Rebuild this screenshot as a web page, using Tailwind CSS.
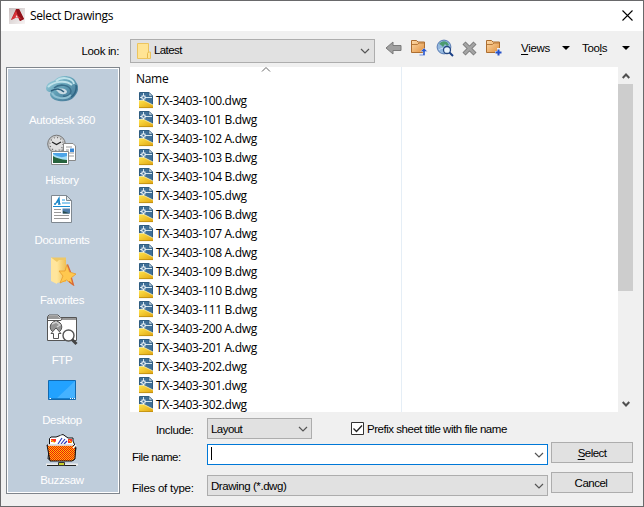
<!DOCTYPE html>
<html lang="en">
<head>
<meta charset="utf-8">
<title>Select Drawings</title>
<script src="https://cdn.jsdelivr.net/npm/@tailwindcss/browser@4"></script>
</head>
<body class="overflow-hidden">
<svg class="absolute h-0 w-0" aria-hidden="true">
  <defs>
    <linearGradient id="fold" x1="0" y1="0" x2="1" y2="1"><stop offset="0" stop-color="#ffdcaa"/><stop offset="1" stop-color="#e0903f"/></linearGradient>
    <linearGradient id="swirl" x1="0" y1="0" x2="1" y2="1"><stop offset="0" stop-color="#a9dbe6"/><stop offset=".5" stop-color="#5f9db4"/><stop offset="1" stop-color="#3f6f90"/></linearGradient>
    <linearGradient id="yel" x1="0" y1="0" x2="1" y2="0"><stop offset="0" stop-color="#ffe69a"/><stop offset="1" stop-color="#f0bf55"/></linearGradient>
    <linearGradient id="gold" x1="0" y1="0" x2="1" y2="1"><stop offset="0" stop-color="#ffe24a"/><stop offset="1" stop-color="#e0a410"/></linearGradient>
    <linearGradient id="logo" x1="0" y1="0" x2="1" y2="1"><stop offset="0" stop-color="#c9c0c0"/><stop offset="1" stop-color="#f8f4f4"/></linearGradient>
    <pattern id="chk" width="2" height="2" patternUnits="userSpaceOnUse"><rect width="2" height="2" fill="#ffc400"/><rect width="1" height="1" fill="#f01010"/><rect x="1" y="1" width="1" height="1" fill="#f01010"/></pattern>
    <symbol id="dwg" viewBox="0 0 15 17">
      <path d="M.5 .5H10L13.500 4V15.500H.5Z" fill="#3f6f98" stroke="#2f5c80"/>
      <path d="M10 .5V4H13.500Z" fill="#dfeaf0" stroke="#2f5c80" stroke-width=".6"/>
      <path d="M4.500 1V9M1 5.500H13" stroke="#d3e5ef"/><rect x="3" y="4" width="3" height="3" fill="#3f6f98" stroke="#fff" stroke-width=".9"/>
      <path d="M0 8.500H5L14 13V16H0Z" fill="url(#gold)"/><path d="M0 8.500H5L14 13" stroke="#fff3b0" stroke-width=".8" fill="none"/><path d="M0 15.600H14" stroke="#b98a10" stroke-width=".8"/>
    </symbol>
    <symbol id="chev" viewBox="0 0 10 6"><path d="M1 1L5 5L9 1" fill="none" stroke="#555" stroke-width="1.200"/></symbol>
  </defs>
</svg>
<main class="flex h-[507px] w-[644px] flex-col border border-[#69696b] bg-[#f0f0f0] font-['Liberation_Sans',Arial,sans-serif] text-[11.5px] text-black">
  <header class="flex h-[30px] shrink-0 items-center bg-white pl-2">
    <svg class="h-4 w-4" viewBox="0 0 16 16"><rect width="16" height="16" fill="url(#logo)"/><path d="M2 12L7 1H10L15 11L11 13L9 9L6 10Z" fill="#b51f27"/><path d="M7 1H10L15 11L11 13L8 6Z" fill="#8f1119"/><path d="M2 12L7 3L9 8L13 11L9 10L6 10Z" fill="#d9343a"/><path d="M7.500 7L6.500 9.500H9Z" fill="#f5e4e4"/></svg>
    <h1 class="ml-[5px] font-['Open_Sans','Noto_Sans',sans-serif] text-[12px] leading-4 tracking-[-0.36px]">Select Drawings</h1>
    <svg class="mr-[10px] mb-[2px] ml-auto h-[11px] w-[11px]" viewBox="0 0 11 11"><path d="M.5 .5L10.500 10.500M10.500 .5L.5 10.500" stroke="#000" stroke-width="1.100"/></svg>
  </header>

  <section class="flex h-9 shrink-0 items-start pt-[8px]">
    <div class="w-[118px] pt-[5px] text-right leading-[14px] tracking-[-0.35px]">Look in:</div>
    <div class="ml-[11px] flex h-[24px] w-[245px] items-center border border-[#adadad] bg-[#e1e1e1] pr-[4px] pl-[6px]">
      <svg class="h-4 w-[14px]" viewBox="0 0 14 16"><path d="M.5 .5H11.500V9H13.500V15.500H.5Z" fill="#ffe494" stroke="#ecc45e"/><path d="M10.500 15V10.500L11.500 9" fill="none" stroke="#e5b94c"/></svg>
      <span class="mb-[2px] ml-[3px] leading-[14px] tracking-[-0.6px]">Latest</span>
      <svg class="ml-auto h-[6px] w-[10px]"><use href="#chev"/></svg>
    </div>
    <div class="flex h-[18px] items-center pl-[10px]">
      <svg class="h-[18px] w-[17px]" viewBox="0 0 17 18"><path d="M1 9L8 3V6.500H16V11.500H8V15Z" fill="#a0a0a0" stroke="#7b7b7b" stroke-linejoin="round"/></svg>
      <svg class="ml-[8px] h-[18px] w-[18px]" viewBox="0 0 18 18"><path d="M1.500 1.500H6.500L8 3H14.500V13.500H1.500Z" fill="url(#fold)" stroke="#ad6e30"/><path d="M2 5.500H7.500L9 4H14" stroke="#b87938" fill="none"/><path d="M9.500 15.500H13V12.500H10.500L14 9L17.500 12.500H15V16.500H9.500Z" fill="#2858d0" stroke="#f0f0f0" stroke-width=".4"/></svg>
      <svg class="ml-[8px] h-[18px] w-[18px]" viewBox="0 0 18 18"><circle cx="8" cy="8" r="6.900" fill="#94b8df" stroke="#5c7eb5"/><path d="M3 5Q6 1 11 3L13 6L11 7L9 5L7 8L5 6Z" fill="#4c9b70"/><path d="M3 11Q7 7 12 12" stroke="#c7dff4" fill="none"/><circle cx="11" cy="11" r="3.500" fill="#e8f4fc" stroke="#244882" stroke-width="1.300"/><path d="M13.500 13.500L17 17" stroke="#183e86" stroke-width="2"/></svg>
      <svg class="ml-[7px] h-[18px] w-[17px]" viewBox="0 0 17 18"><path d="M3 4L14 15M14 4L3 15" stroke="#777" stroke-width="4.300"/><path d="M3.500 4.500L13.500 14.500M13.500 4.500L3.500 14.500" stroke="#a4a4a4" stroke-width="2.600"/></svg>
      <svg class="ml-[7px] h-[18px] w-[18px]" viewBox="0 0 18 18"><path d="M1.500 1.500H6.500L8 3H14.500V13.500H1.500Z" fill="url(#fold)" stroke="#ad6e30"/><path d="M2 5.500H7.500L9 4H14" stroke="#b87938" fill="none"/><path d="M13.500 9V17M10 13.500H17" stroke="#f0f0f0" stroke-width="3"/><path d="M13.500 10.500V16.500M10.500 13.500H16.500" stroke="#2450c8" stroke-width="2"/></svg>
    </div>
    <div class="ml-[18px] flex pt-[2px] leading-[14px]">
      <span class="w-[41px] tracking-[-0.3px]"><u class="underline-offset-2">V</u>iews</span>
      <svg class="mt-[5px] h-1 w-[8px]" viewBox="0 0 8 4"><path d="M0 0H8L4 4Z"/></svg>
      <span class="ml-[12px] w-[40px] tracking-[-0.35px]">Too<u class="underline-offset-2">l</u>s</span>
      <svg class="mt-[5px] h-1 w-[8px]" viewBox="0 0 8 4"><path d="M0 0H8L4 4Z"/></svg>
    </div>
  </section>

  <div class="flex min-h-0 flex-1">
    <nav class="ml-[5px] h-[427px] w-[114px] shrink-0 border border-[#7f858c] bg-white p-px">
      <div class="flex h-full flex-col bg-[#bfcddb] pr-[2px] text-center text-white [&>div]:flex [&>div]:h-[60px] [&>div]:shrink-0 [&>div]:flex-col [&>div]:items-center [&_span]:mt-[7px] [&_span]:leading-[14px] [&_span]:tracking-[-0.35px] [&_svg]:mt-[5px] [&_svg]:h-8 [&_svg]:w-8 [&_svg]:shrink-0">
        <div><svg viewBox="0 0 32 32"><path d="M0 14C1 8 6 8 9 6C14 0 27 1 30 8C34 13 32 19 28 23C24 28 15 28 9 26C4 24 3 20 5 18C1 18 0 16 0 14Z" fill="url(#swirl)"/><path d="M10 7C16 2 27 4 28 10M2 13C8 7 20 6 26 11" fill="none" stroke="#bfe2ea" stroke-width="2"/><path d="M8 14C14 9 24 11 25 17C25 21 21 23 17 22" fill="none" stroke="#3a6f8b" stroke-width="1.500"/><path d="M10 16C15 13 21 15 21 18C20 21 14 21 12 18Z" fill="#c9dbe4"/><path d="M6 19C9 25 20 26 25 21" fill="none" stroke="#8fc0d2" stroke-width="2"/><path d="M5 17C10 14 15 15 18 18" fill="none" stroke="#2f607d" stroke-width="1.500"/><path d="M30 11C31 17 28 21 25 23" fill="none" stroke="#2f6482" stroke-width="1.500"/></svg><span>Autodesk 360</span></div>
        <div><svg viewBox="0 0 32 32"><circle cx="10.500" cy="10" r="8.800" fill="#c8c8c8" stroke="#777"/><circle cx="10.500" cy="10" r="6.800" fill="#e0e0e0"/><circle cx="10.500" cy="10" r="6.500" fill="none" stroke="#555" stroke-dasharray=".8 2.600" stroke-width="1.200"/><path d="M6 8L10.500 10.500L15 8" fill="none" stroke="#222" stroke-width="1.200"/><path d="M17.500 9.500H27L29.500 12V26.500H17.500Z" fill="#fff" stroke="#888"/><path d="M20 13H26M20 16H23M20 19H28M20 22H28" stroke="#999"/><path d="M24 14.500H28V18H24Z" fill="#3787d5"/><path d="M5.500 17.500H22.500V30.500H5.500Z" fill="#fff" stroke="#888"/><path d="M7 19H21V29H7Z" fill="#4da4e7"/><path d="M7 20Q14 25 21 22V26H7Z" fill="#a7def5"/><path d="M7 22Q12 25 21 26V29H7Z" fill="#27633d"/></svg><span>History</span></div>
        <div><svg viewBox="0 0 32 32"><path d="M5.500 1.500H20.500L25.500 6.500V28.500H5.500Z" fill="#fff" stroke="#7f8890"/><path d="M20.500 1.500V6.500H25.500Z" fill="#dce5e9" stroke="#7f8890"/><path d="M8 10H10M12 10H14.500M9.500 10L13 4L13.500 10M11 8H14" fill="none" stroke="#1785c8" stroke-width="1.300"/><path d="M16 6H19M16 9H24" stroke="#269ae0"/><path d="M7 12.500H24" stroke="#168bd1"/><path d="M8 15.500H15M8 18.500H15M8 21.500H23M8 24.500H23" stroke="#999"/><path d="M16.500 14.500H24V19.500H16.500Z" fill="#507eab"/><path d="M17 17L24 19.500H17Z" fill="#284d4c"/></svg><span>Documents</span></div>
        <div><svg viewBox="0 0 32 32"><path d="M5 3.500H20V28H10L5 26Z" fill="#efc866"/><path d="M5 3.500L11 8V30L5 27Z" fill="#ffe59c"/><path d="M11 8L13 6H20V27L11 29Z" fill="url(#yel)"/><path d="M21 10.500L23.500 18L30 20L25 24L27 31L20.500 26L14 29L17 22L13 17H19Z" fill="#ffc84f" stroke="#e99c2c" stroke-width=".8"/><path d="M21.500 10.500L24.500 18M25.500 24L27.500 31L23 27.500" fill="none" stroke="#d96835" stroke-width="1.200"/></svg><span>Favorites</span></div>
        <div><svg viewBox="0 0 32 32"><path d="M1.500 26V2.500L3 1H12L14.500 3.500H30.500V26.500H1.500Z" fill="#fff" stroke="#555"/><path d="M2 2H12L15 5H2ZM16 4H30V6H16Z" fill="#999"/><path d="M2 6.500H15L16 4" fill="none" stroke="#555"/><circle cx="10" cy="13" r="5.800" fill="#949494" stroke="#555"/><path d="M6 10L10 8L14 11L11 13" stroke="#d0d0d0" stroke-width="1.500" fill="none"/><path d="M10 14L15 19.500H12.500V24.500H7.500V19.500H5Z" fill="#fff" stroke="#555"/><circle cx="22.500" cy="21.500" r="5.500" fill="#fff" stroke="#555" stroke-width="1.400"/><path d="M26 25.500L30.500 30" stroke="#444" stroke-width="3"/></svg><span>FTP</span></div>
        <div><svg viewBox="0 0 32 32"><path d="M2.500 6.500H29.500V25.500H2.500Z" fill="#22a2ff" stroke="#1269af"/><path d="M10 25L29 7V25Z" fill="#45b2ff"/><path d="M3 24.500H29" stroke="#1680d0"/><path d="M3.500 24.500H5M24 24.500H25M26 24.500H27M28 24.500H29" stroke="#fff"/></svg><span>Desktop</span></div>
        <div><svg viewBox="0 0 32 32"><path d="M3.500 12V4.500L5 3H10L17 .5L22 4H27V7L30 14L28 26L2 25Z" fill="#fff" stroke="#111"/><path d="M5 5H10V8H5M22 5H26V9H22Z" fill="#ff3423"/><path d="M5 6L9 9M23 6L26 9" stroke="#ffde00"/><path d="M6 12L15 1L25 12Z" fill="#fff"/><path d="M12 10L16 4M15 10L19 5M18 10L21 7" stroke="#283aba" stroke-width="1.200"/><path d="M1 11H27L29.500 14L29 25L26 27H4Z" fill="url(#chk)" stroke="#111"/><path d="M2 11H27M27 14L30 11" stroke="#fff" stroke-width="1.400"/><path d="M0 30.500H32" stroke="#eee" stroke-width="2"/><path d="M1 31.500H30" stroke="#222"/><path d="M12.500 28.500H18.500V31.500H12.500Z" fill="#cbd02d" stroke="#333"/></svg><span>Buzzsaw</span></div>
      </div>
    </nav>

    <div class="ml-[10px] flex w-[503px] flex-col">
      <div class="flex h-[345px] shrink-0 overflow-hidden bg-white font-['Open_Sans','Noto_Sans',sans-serif] text-[12px]">
        <div class="w-[272px] border-r border-[#e5eef6] pl-[6px]">
          <div class="flex h-[24px] leading-6"><span class="w-[33px] tracking-[-0.3px]">Name</span><svg class="ml-[92px] h-[5px] w-[10px]" viewBox="0 0 10 5"><path d="M1 4.500L5 .5L9 4.500" fill="none" stroke="#666"/></svg></div>
          <ul id="files" class="pl-[3px] leading-[19px] tracking-[-0.32px]"></ul>
        </div>
        <div class="flex-1"></div>
        <div class="flex w-[15px] flex-col items-center bg-[#f0f0f0]">
          <svg class="mt-[6px] h-[6px] w-[8px]" viewBox="0 0 8 6"><path d="M.7 5L4 1.500L7.300 5" fill="none" stroke="#505050" stroke-width="2"/></svg>
          <div class="mt-[5px] h-[207px] w-full bg-[#cdcdcd]"></div>
          <svg class="mt-auto mb-[5px] h-[6px] w-[8px]" viewBox="0 0 8 6"><path d="M.7 1L4 4.500L7.300 1" fill="none" stroke="#505050" stroke-width="2"/></svg>
        </div>
      </div>
      <form class="flex gap-[3px] pt-[6px] leading-[14px]">
        <div class="w-[418px]">
          <div class="flex h-[26px]">
            <label class="w-[77px] pt-[5px] pl-[26px] tracking-[-0.37px]">Include:</label>
            <div class="flex h-[21px] w-[105px] items-center border border-[#adadad] bg-[#e1e1e1] px-[3px]"><span class="tracking-[-0.55px]">Layout</span><svg class="ml-auto h-[6px] w-[10px]"><use href="#chev"/></svg></div>
            <svg class="mt-1 ml-[39px] h-[13px] w-[13px]" viewBox="0 0 13 13"><path d="M.5 .5H12.500V12.500H.5Z" fill="#fff" stroke="#333"/><path d="M2.500 6.500L5.500 9.500L11 3.500" fill="none" stroke="#222" stroke-width="1.300"/></svg>
            <span class="mt-1 ml-[3px] whitespace-nowrap tracking-[-0.47px]">Prefix sheet title with file name</span>
          </div>
          <div class="flex h-[31px]">
            <label class="w-[77px] pt-[6px] pl-[2px] tracking-[-0.5px]">File name:</label>
            <div class="flex h-[21px] w-[341px] items-center border border-[#0078d7] bg-white px-[3px]"><i class="mb-[2px] h-[13px] w-px bg-black"></i><svg class="ml-auto h-[6px] w-[10px]"><use href="#chev"/></svg></div>
          </div>
          <div class="flex h-[21px]">
            <label class="w-[77px] pt-[6px] pl-[2px] tracking-[-0.25px]">Files of type:</label>
            <div class="flex h-[21px] w-[341px] items-center border border-[#adadad] bg-[#e1e1e1] px-[3px]"><span class="tracking-[-0.43px]">Drawing (*.dwg)</span><svg class="ml-auto h-[6px] w-[10px]"><use href="#chev"/></svg></div>
          </div>
        </div>
        <div class="flex w-[82px] flex-col gap-[9px] pt-[24px]">
          <button type="button" class="h-[21px] border border-[#adadad] bg-[#e1e1e1] leading-[14px] tracking-[-0.55px]"><u class="underline-offset-2">S</u>elect</button>
          <button type="button" class="h-[21px] border border-[#adadad] bg-[#e1e1e1] pr-[2px] leading-[14px] tracking-[-0.5px]">Cancel</button>
        </div>
      </form>
    </div>
  </div>
</main>
<script>
  const names = ['100', '101 B', '102 A', '103 B', '104 B', '105', '106 B', '107 A', '108 A', '109 B', '110 B', '111 B', '200 A', '201 A', '202', '301', '302'];
  document.getElementById('files').innerHTML = names.map(n =>
    `<li class="flex h-[19px] items-center gap-[2px]"><svg class="h-[17px] w-[15px]"><use href="#dwg"/></svg><span>TX-3403-${n}.dwg</span></li>`).join('');
</script>
</body>
</html>
